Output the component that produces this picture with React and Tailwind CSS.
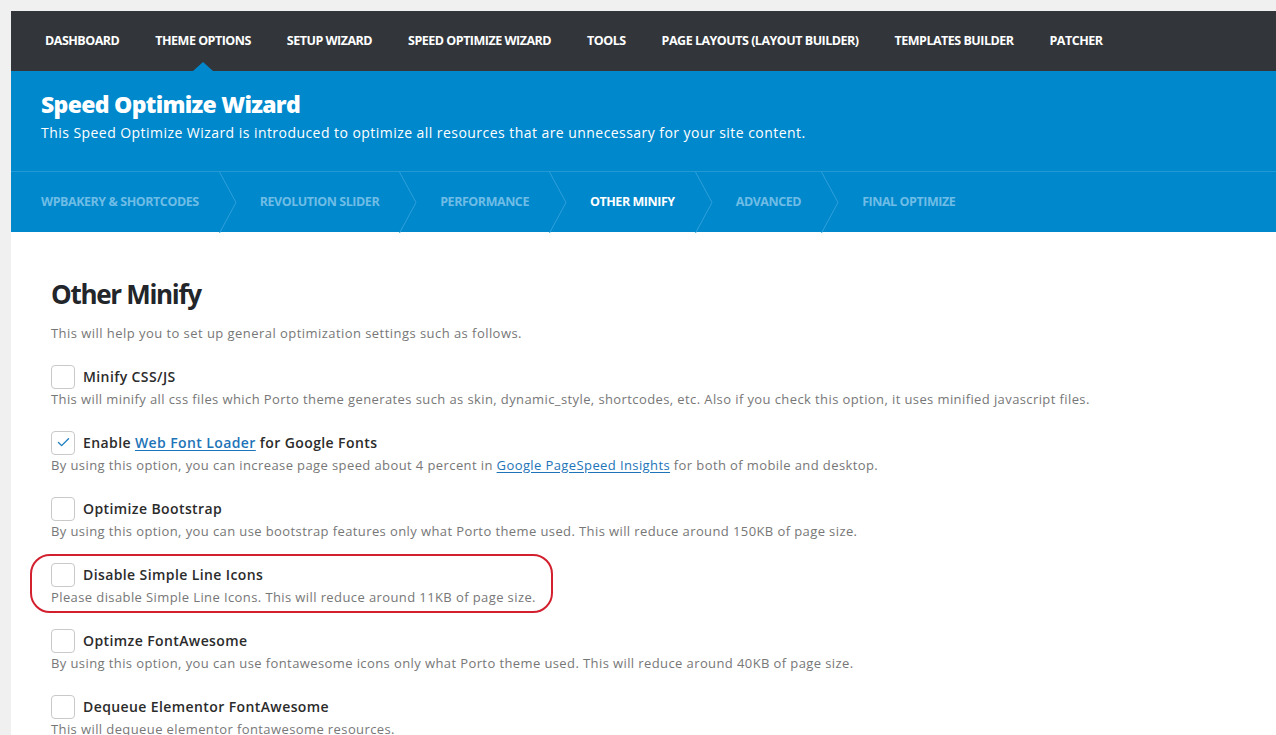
import { Check } from "lucide-react";

const NAV = [
  "DASHBOARD",
  "THEME OPTIONS",
  "SETUP WIZARD",
  "SPEED OPTIMIZE WIZARD",
  "TOOLS",
  "PAGE LAYOUTS (LAYOUT BUILDER)",
  "TEMPLATES BUILDER",
  "PATCHER",
];

const STEPS = [
  { label: "WPBAKERY & SHORTCODES" },
  { label: "REVOLUTION SLIDER" },
  { label: "PERFORMANCE" },
  { label: "OTHER MINIFY", active: true },
  { label: "ADVANCED" },
  { label: "FINAL OPTIMIZE", last: true },
];

const font = { fontFamily: '"Open Sans", "Liberation Sans", sans-serif' };

const Chevron = () => (
  <svg width="18" height="61" viewBox="0 0 18 61" className="shrink-0">
    <path d="M0.5 0 L17 30.5 L0.5 61" fill="none" stroke="#2fa0dc" strokeWidth="1" />
  </svg>
);

const Box = ({ checked }) => (
  <span className="w-6 h-6 shrink-0 rounded-[4px] border border-[#c9c9c9] bg-white flex items-center justify-center">
    {checked && <Check size={15} strokeWidth={2.2} className="text-[#1d7fc0]" />}
  </span>
);

const Option = ({ checked, title, children }) => (
  <div className="flex flex-col">
    <div className="flex items-center gap-2">
      <Box checked={checked} />
      <span className="text-[14px] font-semibold text-[#2b2b2b] tracking-[0.4px]">{title}</span>
    </div>
    <p className="text-[13px] text-[#777] leading-[20px] tracking-[0.4px]">{children}</p>
  </div>
);

const Link = ({ children }) => (
  <a href="#" className="text-[#1d74b8] underline underline-offset-2">{children}</a>
);

export default function App() {
  return (
    <div className="min-h-screen bg-[#f0f0f1] pl-[11px] pt-[11px] overflow-hidden" style={font}>
      {/* Top nav */}
      <nav className="h-[60px] bg-[#32363b] flex items-center pl-[34px] gap-[36px]">
        {NAV.map((n) => (
          <div key={n} className="relative h-full flex items-center">
            <span className="text-white text-[12.5px] font-bold tracking-[-0.5px] whitespace-nowrap">{n}</span>
            {n === "THEME OPTIONS" && (
              <span className="absolute bottom-0 left-1/2 -translate-x-1/2 w-0 h-0 border-l-[10px] border-r-[10px] border-b-[9px] border-l-transparent border-r-transparent border-b-[#0088cc]" />
            )}
          </div>
        ))}
      </nav>

      {/* Blue header */}
      <header className="bg-[#0088cc]">
        <div className="h-[100px] pl-[30px] pt-[18px]">
          <h1 className="text-white text-[23px] font-extrabold tracking-[-0.7px] leading-[30px]">Speed Optimize Wizard</h1>
          <p className="text-white text-[14px] mt-[4px] leading-[20px] tracking-[0.45px]">
            This Speed Optimize Wizard is introduced to optimize all resources that are unnecessary for your site content.
          </p>
        </div>
        <div className="h-[61px] border-t border-[#229ad6] flex items-center pl-[30px]">
          {STEPS.map((s) => (
            <div key={s.label} className="flex items-center h-full">
              <span
                className={`text-[12.5px] font-bold tracking-[-0.45px] whitespace-nowrap ${
                  s.active ? "text-white" : "text-[#6fbde6]"
                }`}
              >
                {s.label}
              </span>
              {!s.last && (
                <div className="flex items-center h-full pl-[20px] pr-[23px]">
                  <Chevron />
                </div>
              )}
            </div>
          ))}
        </div>
      </header>

      {/* Content */}
      <main className="bg-white pl-[40px] pt-[45px] pb-[40px]">
        <h2 className="text-[26px] font-bold text-[#222529] tracking-[-1.3px] leading-[34px]">Other Minify</h2>
        <p className="text-[13px] text-[#777] mt-[13px] tracking-[0.45px]">
          This will help you to set up general optimization settings such as follows.
        </p>

        <div className="flex flex-col gap-[22px] mt-[21px]">
          <Option title="Minify CSS/JS">
            This will minify all css files which Porto theme generates such as skin, dynamic_style, shortcodes, etc. Also if you check this option, it uses minified javascript files.
          </Option>
          <Option
            checked
            title={
              <>
                Enable <Link>Web Font Loader</Link> for Google Fonts
              </>
            }
          >
            By using this option, you can increase page speed about 4 percent in <Link>Google PageSpeed Insights</Link> for both of mobile and desktop.
          </Option>
          <Option title="Optimize Bootstrap">
            By using this option, you can use bootstrap features only what Porto theme used. This will reduce around 150KB of page size.
          </Option>
          <div className="relative">
            <Option title="Disable Simple Line Icons">
              Please disable Simple Line Icons. This will reduce around 11KB of page size.
            </Option>
            <div className="absolute -left-[21px] -top-[9px] w-[523px] h-[59px] border-2 border-[#d3202f] rounded-[20px] pointer-events-none" />
          </div>
          <Option title="Optimze FontAwesome">
            By using this option, you can use fontawesome icons only what Porto theme used. This will reduce around 40KB of page size.
          </Option>
          <Option title="Dequeue Elementor FontAwesome">This will dequeue elementor fontawesome resources.</Option>
        </div>
      </main>
    </div>
  );
}
